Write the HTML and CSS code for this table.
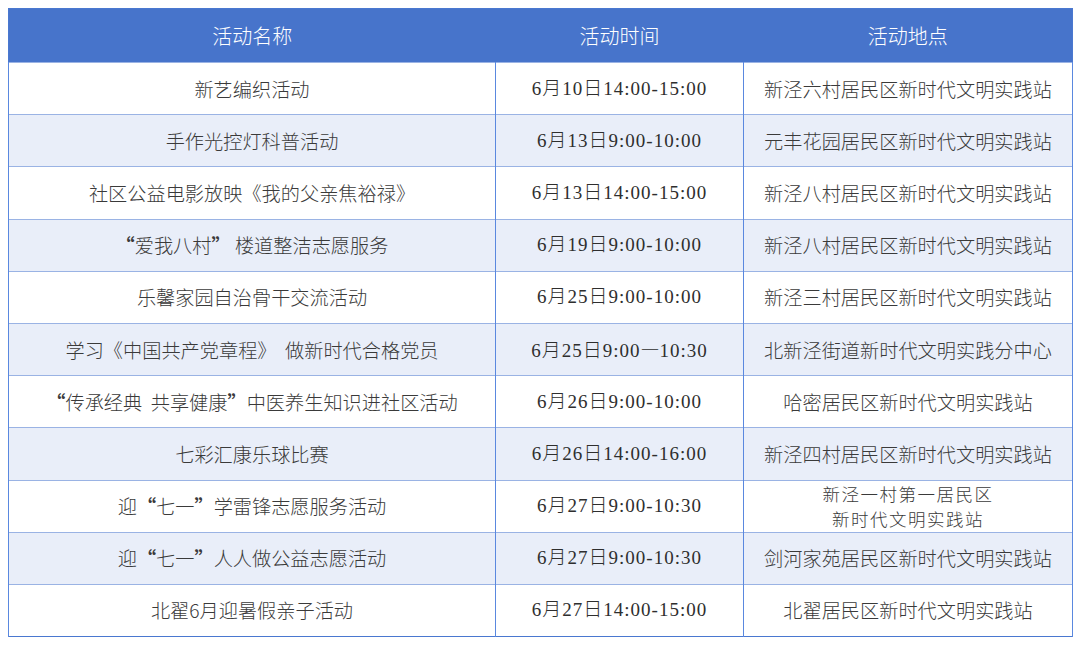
FILE: index.html
```html
<!DOCTYPE html>
<html lang="zh-CN">
<head>
<meta charset="utf-8">
<link rel="stylesheet" href="styles.css">
</head>
<body>
<table class="schedule">
  <colgroup>
    <col class="c-name">
    <col class="c-time">
    <col class="c-place">
  </colgroup>
  <thead>
    <tr><th>活动名称</th><th>活动时间</th><th>活动地点</th></tr>
  </thead>
  <tbody>
    <tr><td>新艺编织活动</td><td class="time">6月10日14:00-15:00</td><td>新泾六村居民区新时代文明实践站</td></tr>
    <tr class="alt"><td>手作光控灯科普活动</td><td class="time">6月13日9:00-10:00</td><td>元丰花园居民区新时代文明实践站</td></tr>
    <tr><td>社区公益电影放映《我的父亲焦裕禄》</td><td class="time">6月13日14:00-15:00</td><td>新泾八村居民区新时代文明实践站</td></tr>
    <tr class="alt"><td><span class="q">“</span>爱我八村<span class="q">”</span> 楼道整洁志愿服务</td><td class="time">6月19日9:00-10:00</td><td>新泾八村居民区新时代文明实践站</td></tr>
    <tr><td>乐馨家园自治骨干交流活动</td><td class="time">6月25日9:00-10:00</td><td>新泾三村居民区新时代文明实践站</td></tr>
    <tr class="alt"><td>学习《中国共产党章程》 &nbsp;做新时代合格党员</td><td class="time">6月25日9:00<span class="dash">—</span>10:30</td><td>北新泾街道新时代文明实践分中心</td></tr>
    <tr><td><span class="q">“</span>传承经典 &nbsp;共享健康<span class="q">”</span>中医养生知识进社区活动</td><td class="time">6月26日9:00-10:00</td><td>哈密居民区新时代文明实践站</td></tr>
    <tr class="alt"><td>七彩汇康乐球比赛</td><td class="time">6月26日14:00-16:00</td><td>新泾四村居民区新时代文明实践站</td></tr>
    <tr><td>迎<span class="q">“</span>七一<span class="q">”</span>学雷锋志愿服务活动</td><td class="time">6月27日9:00-10:30</td><td class="two">新泾一村第一居民区<br>新时代文明实践站</td></tr>
    <tr class="alt"><td>迎<span class="q">“</span>七一<span class="q">”</span>人人做公益志愿活动</td><td class="time">6月27日9:00-10:30</td><td>剑河家苑居民区新时代文明实践站</td></tr>
    <tr><td>北翟6月迎暑假亲子活动</td><td class="time">6月27日14:00-15:00</td><td>北翟居民区新时代文明实践站</td></tr>
  </tbody>
</table>
</body>
</html>
```

FILE: styles.css
```css
html, body {
  margin: 0;
  padding: 0;
  background: #ffffff;
}
body {
  padding: 8px;
  font-family: "Noto Sans CJK SC", "Noto Sans", sans-serif;
  color: #3a3a3a;
}
.schedule {
  width: 1064px;
  border-collapse: collapse;
  table-layout: fixed;
  border: 1px solid #4a78d0;
}
.c-name { width: 487px; }
.c-time { width: 248px; }
.c-place { width: 329px; }

.schedule th {
  height: 53px;
  background: #4774cb;
  color: #ffffff;
  font-weight: 300;
  font-size: 20px;
  text-align: center;
  vertical-align: middle;
  padding: 0;
  border: none;
}
.schedule td {
  height: 51.2px;
  padding: 0;
  font-size: 19.2px;
  font-weight: 300;
  line-height: 24px;
  text-align: center;
  vertical-align: middle;
  border-top: 1px solid #9ab3e4;
  border-left: 1px solid #5a88df;
  border-right: 1px solid #5a88df;
  color: #3a3a3a;
}
.schedule tr.alt td {
  background: #e9eef9;
}
.schedule td .q {
  font-weight: 700;
}
.schedule td.time {
  font-family: "Liberation Serif", "Noto Sans CJK SC", serif;
  font-size: 19px;
  font-weight: 300;
  letter-spacing: 1px;
  color: #2e2e2e;
}
.schedule td.time .dash {
  font-family: "Noto Sans CJK SC", sans-serif;
  letter-spacing: 0;
}
.schedule td.two {
  font-size: 17.5px;
  line-height: 25.4px;
  letter-spacing: 1.5px;
}
```
